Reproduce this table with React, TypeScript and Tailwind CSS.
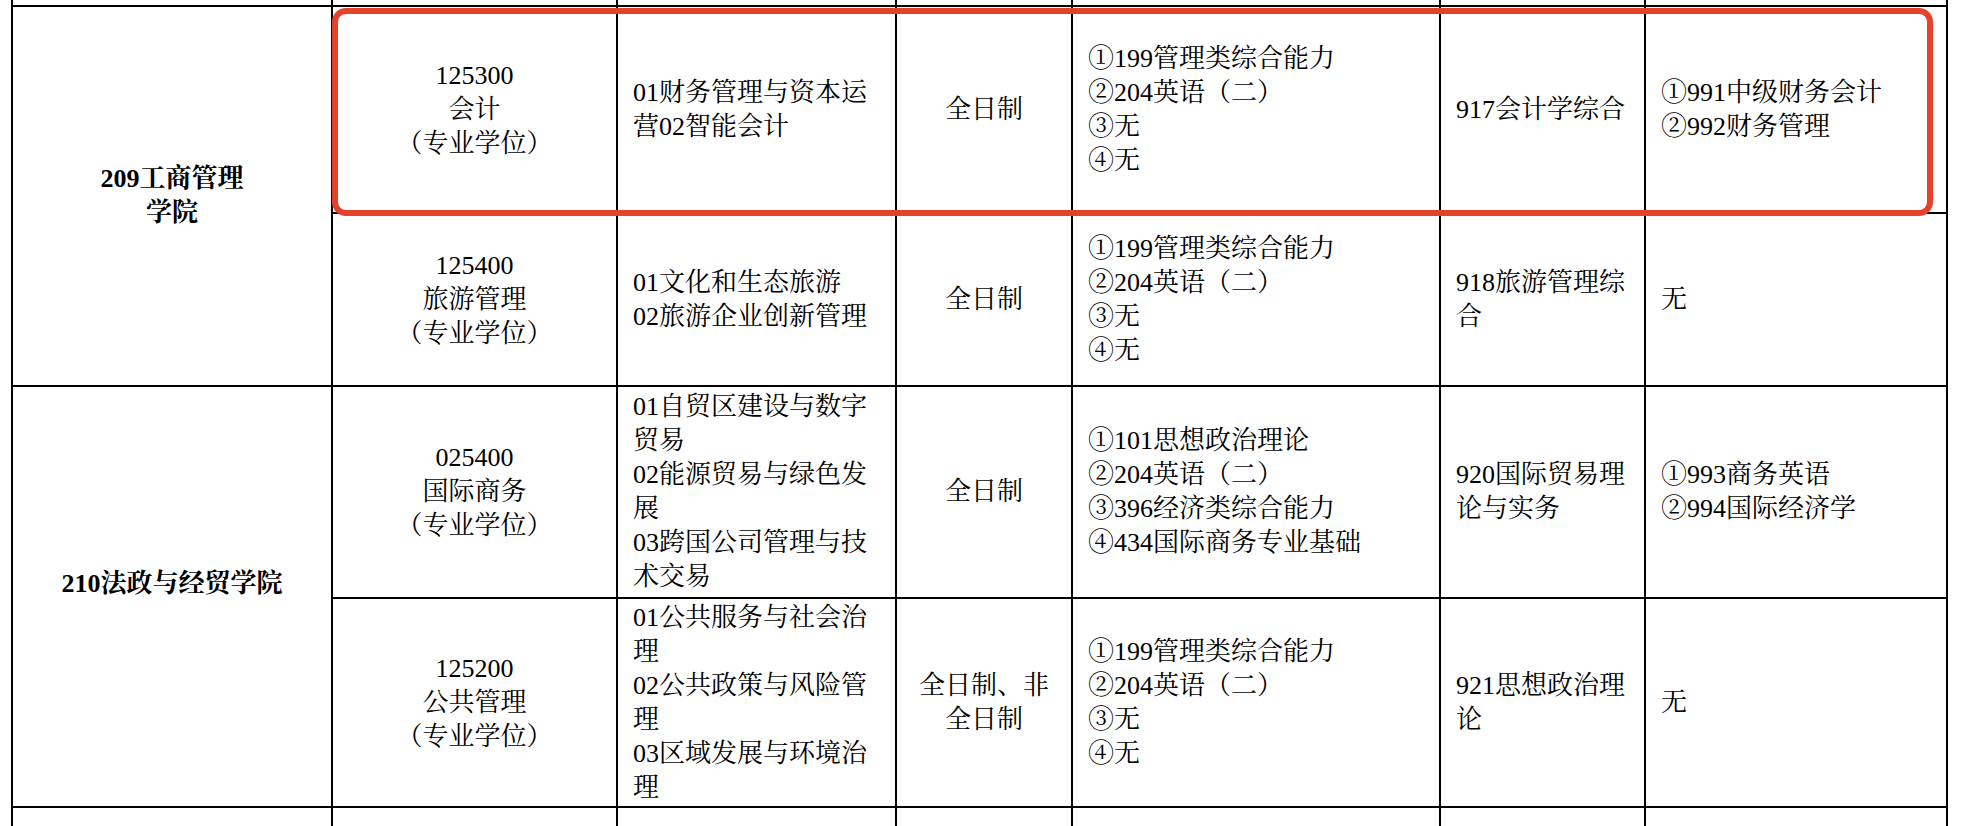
import React from 'react';

type Row = {
  code: string;
  name: string;
  directions: string[];
  mode: string;
  exams: string[];
  major: string;
  retest: string[];
  height: string;
};

const rows: Row[] = [
  {
    code: '125300',
    name: '会计',
    directions: ['01财务管理与资本运营02智能会计'],
    mode: '全日制',
    exams: ['①199管理类综合能力', '②204英语（二）', '③无', '④无'],
    major: '917会计学综合',
    retest: ['①991中级财务会计', '②992财务管理'],
    height: 'h-[207px]',
  },
  {
    code: '125400',
    name: '旅游管理',
    directions: ['01文化和生态旅游', '02旅游企业创新管理'],
    mode: '全日制',
    exams: ['①199管理类综合能力', '②204英语（二）', '③无', '④无'],
    major: '918旅游管理综合',
    retest: ['无'],
    height: 'h-[173px]',
  },
  {
    code: '025400',
    name: '国际商务',
    directions: ['01自贸区建设与数字贸易', '02能源贸易与绿色发展', '03跨国公司管理与技术交易'],
    mode: '全日制',
    exams: ['①101思想政治理论', '②204英语（二）', '③396经济类综合能力', '④434国际商务专业基础'],
    major: '920国际贸易理论与实务',
    retest: ['①993商务英语', '②994国际经济学'],
    height: 'h-[212px]',
  },
  {
    code: '125200',
    name: '公共管理',
    directions: ['01公共服务与社会治理', '02公共政策与风险管理', '03区域发展与环境治理'],
    mode: '全日制、非全日制',
    exams: ['①199管理类综合能力', '②204英语（二）', '③无', '④无'],
    major: '921思想政治理论',
    retest: ['无'],
    height: 'h-[209px]',
  },
];

const cell = 'border-2 border-black px-[15px] py-0 align-middle';

const Lines = ({ items }: { items: string[] }) => (
  <>
    {items.map((t, i) => (
      <div key={i}>{t}</div>
    ))}
  </>
);

const DegreeCell = ({ row }: { row: Row }) => (
  <td className={`${cell} text-center`}>
    <div>{row.code}</div>
    <div>{row.name}</div>
    <div className="[font-feature-settings:'halt']">（专业学位）</div>
  </td>
);

const RestCells = ({ row }: { row: Row }) => (
  <>
    <td className={`${cell} text-left`}>
      <Lines items={row.directions} />
    </td>
    <td className={`${cell} text-center`}>{row.mode}</td>
    <td className={`${cell} text-left`}>
      <Lines items={row.exams} />
    </td>
    <td className={`${cell} text-left`}>{row.major}</td>
    <td className={`${cell} text-left`}>
      <Lines items={row.retest} />
    </td>
  </>
);

export default function App() {
  return (
    <div className="relative w-[1962px] h-[826px] overflow-hidden bg-white text-black">
      <table className="ml-[11px] table-fixed border-collapse text-[26px] leading-[34px] w-[1935px] font-['Liberation_Serif','Noto_Serif_CJK_SC','Noto_Sans_CJK_SC',serif]">
        <colgroup>
          <col className="w-[320px]" />
          <col className="w-[285px]" />
          <col className="w-[279px]" />
          <col className="w-[176px]" />
          <col className="w-[368px]" />
          <col className="w-[205px]" />
          <col className="w-[302px]" />
        </colgroup>
        <tbody>
          <tr className="h-[6px]">
            {Array.from({ length: 7 }).map((_, i) => (
              <td key={i} className="border-2 border-t-0 border-black p-0" />
            ))}
          </tr>
          <tr className={rows[0].height}>
            <td rowSpan={2} className={`${cell} text-center font-bold`}>
              209工商管理
              <br />
              学院
            </td>
            <DegreeCell row={rows[0]} />
            <RestCells row={rows[0]} />
          </tr>
          <tr className={rows[1].height}>
            <DegreeCell row={rows[1]} />
            <RestCells row={rows[1]} />
          </tr>
          <tr className={rows[2].height}>
            <td rowSpan={2} className={`${cell} text-center font-bold pb-[26px]`}>
              210法政与经贸学院
            </td>
            <DegreeCell row={rows[2]} />
            <RestCells row={rows[2]} />
          </tr>
          <tr className={rows[3].height}>
            <DegreeCell row={rows[3]} />
            <RestCells row={rows[3]} />
          </tr>
          <tr className="h-[60px]">
            {Array.from({ length: 7 }).map((_, i) => (
              <td key={i} className="border-2 border-black p-0" />
            ))}
          </tr>
        </tbody>
      </table>

      {/* highlight box drawn over the 会计 row */}
      <div className="pointer-events-none absolute left-[332px] top-[8px] w-[1601px] h-[208px] rounded-[14px] border-[6px] border-[#e6412b]" />
    </div>
  );
}
